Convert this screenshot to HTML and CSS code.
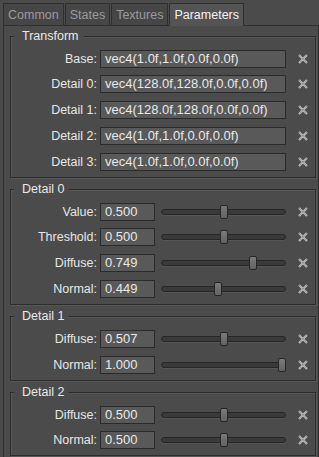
FILE: index.html
```html
<!DOCTYPE html>
<html>
<head>
<meta charset="utf-8">
<link rel="stylesheet" href="styles.css">
</head>
<body>
<div class="tabs">
  <div class="tab">Common</div>
  <div class="tab">States</div>
  <div class="tab">Textures</div>
  <div class="tab active">Parameters</div>
</div>
<div class="panel">
  <div class="group">
    <span class="title">Transform</span>
    <div class="row"><span class="label">Base:</span><div class="field">vec4(1.0f,1.0f,0.0f,0.0f)</div><span class="clr"><svg viewBox="0 0 10 10"><path class="x1" d="M1 1L9 9M9 1L1 9"/><path class="x2" d="M1 1L9 9M9 1L1 9"/></svg></span></div>
    <div class="row"><span class="label">Detail 0:</span><div class="field">vec4(128.0f,128.0f,0.0f,0.0f)</div><span class="clr"><svg viewBox="0 0 10 10"><path class="x1" d="M1 1L9 9M9 1L1 9"/><path class="x2" d="M1 1L9 9M9 1L1 9"/></svg></span></div>
    <div class="row"><span class="label">Detail 1:</span><div class="field">vec4(128.0f,128.0f,0.0f,0.0f)</div><span class="clr"><svg viewBox="0 0 10 10"><path class="x1" d="M1 1L9 9M9 1L1 9"/><path class="x2" d="M1 1L9 9M9 1L1 9"/></svg></span></div>
    <div class="row"><span class="label">Detail 2:</span><div class="field">vec4(1.0f,1.0f,0.0f,0.0f)</div><span class="clr"><svg viewBox="0 0 10 10"><path class="x1" d="M1 1L9 9M9 1L1 9"/><path class="x2" d="M1 1L9 9M9 1L1 9"/></svg></span></div>
    <div class="row"><span class="label">Detail 3:</span><div class="field">vec4(1.0f,1.0f,0.0f,0.0f)</div><span class="clr"><svg viewBox="0 0 10 10"><path class="x1" d="M1 1L9 9M9 1L1 9"/><path class="x2" d="M1 1L9 9M9 1L1 9"/></svg></span></div>
  </div>

  <div class="group">
    <span class="title">Detail 0</span>
    <div class="row"><span class="label">Value:</span><div class="ctl"><div class="field num">0.500</div><div class="slider"><div class="groove"></div><div class="handle" style="left:58.5px"></div></div></div><span class="clr"><svg viewBox="0 0 10 10"><path class="x1" d="M1 1L9 9M9 1L1 9"/><path class="x2" d="M1 1L9 9M9 1L1 9"/></svg></span></div>
    <div class="row"><span class="label">Threshold:</span><div class="ctl"><div class="field num">0.500</div><div class="slider"><div class="groove"></div><div class="handle" style="left:58.5px"></div></div></div><span class="clr"><svg viewBox="0 0 10 10"><path class="x1" d="M1 1L9 9M9 1L1 9"/><path class="x2" d="M1 1L9 9M9 1L1 9"/></svg></span></div>
    <div class="row"><span class="label">Diffuse:</span><div class="ctl"><div class="field num">0.749</div><div class="slider"><div class="groove"></div><div class="handle" style="left:87.6px"></div></div></div><span class="clr"><svg viewBox="0 0 10 10"><path class="x1" d="M1 1L9 9M9 1L1 9"/><path class="x2" d="M1 1L9 9M9 1L1 9"/></svg></span></div>
    <div class="row"><span class="label">Normal:</span><div class="ctl"><div class="field num">0.449</div><div class="slider"><div class="groove"></div><div class="handle" style="left:52.5px"></div></div></div><span class="clr"><svg viewBox="0 0 10 10"><path class="x1" d="M1 1L9 9M9 1L1 9"/><path class="x2" d="M1 1L9 9M9 1L1 9"/></svg></span></div>
  </div>

  <div class="group">
    <span class="title">Detail 1</span>
    <div class="row"><span class="label">Diffuse:</span><div class="ctl"><div class="field num">0.507</div><div class="slider"><div class="groove"></div><div class="handle" style="left:59.3px"></div></div></div><span class="clr"><svg viewBox="0 0 10 10"><path class="x1" d="M1 1L9 9M9 1L1 9"/><path class="x2" d="M1 1L9 9M9 1L1 9"/></svg></span></div>
    <div class="row"><span class="label">Normal:</span><div class="ctl"><div class="field num">1.000</div><div class="slider"><div class="groove"></div><div class="handle" style="left:117px"></div></div></div><span class="clr"><svg viewBox="0 0 10 10"><path class="x1" d="M1 1L9 9M9 1L1 9"/><path class="x2" d="M1 1L9 9M9 1L1 9"/></svg></span></div>
  </div>

  <div class="group">
    <span class="title">Detail 2</span>
    <div class="row"><span class="label">Diffuse:</span><div class="ctl"><div class="field num">0.500</div><div class="slider"><div class="groove"></div><div class="handle" style="left:58.5px"></div></div></div><span class="clr"><svg viewBox="0 0 10 10"><path class="x1" d="M1 1L9 9M9 1L1 9"/><path class="x2" d="M1 1L9 9M9 1L1 9"/></svg></span></div>
    <div class="row"><span class="label">Normal:</span><div class="ctl"><div class="field num">0.500</div><div class="slider"><div class="groove"></div><div class="handle" style="left:58.5px"></div></div></div><span class="clr"><svg viewBox="0 0 10 10"><path class="x1" d="M1 1L9 9M9 1L1 9"/><path class="x2" d="M1 1L9 9M9 1L1 9"/></svg></span></div>
  </div>
</div>
</body>
</html>
```
FILE: styles.css
```css
* { box-sizing: border-box; }
html, body {
  margin: 0;
  padding: 0;
  height: 100%;
  overflow: hidden;
}
body {
  background: #4b4b4b;
  font-family: "Liberation Sans", Arial, sans-serif;
  font-size: 12.5px;
  color: #e6e6e6;
}
.tabs {
  display: flex;
  gap: 1px;
  padding: 3px 0 0 3px;
  height: 25px;
}
.tab {
  height: 22px;
  padding: 3px 4px 0 4px;
  line-height: 16px;
  border: 1px solid #2f2f2f;
  border-bottom: none;
  background: #464646;
  color: #9a9a9a;
}
.tab.active {
  background: #545454;
  color: #f2f2f2;
  height: 23px;
  position: relative;
  z-index: 2;
}
.panel {
  margin-left: 3px;
  width: 316px;
  height: 440px;
  border: 1px solid #2f2f2f;
  padding: 10px 2px 0 6px;
  display: flex;
  flex-direction: column;
  gap: 11.5px;
}
.group {
  position: relative;
  border: 1px solid #2c2c2c;
  box-shadow: 1px 1px 0 #575757, inset 1px 1px 0 #575757;
  padding: 11.5px 0 5px 0;
  display: flex;
  flex-direction: column;
  gap: 5.75px;
}
.title {
  position: absolute;
  top: -8px;
  left: 3px;
  line-height: 15px;
  padding: 0 5px 0 8px;
  background: #4b4b4b;
  color: #e8e8e8;
}
.row {
  display: grid;
  grid-template-columns: 86px 186px 1fr;
  column-gap: 3px;
  height: 20px;
  align-items: center;
}
.label {
  text-align: right;
  color: #e6e6e6;
  white-space: nowrap;
}
.field {
  height: 18px;
  border: 1px solid #2a2a2a;
  background: #595959;
  color: #e8e8e8;
  padding: 0 0 0 4px;
  font-size: 13px;
  line-height: 16px;
  white-space: nowrap;
  overflow: hidden;
}
.ctl {
  display: flex;
  align-items: center;
  gap: 6px;
  height: 20px;
}
.field.num {
  width: 55px;
  flex: none;
}
.slider {
  position: relative;
  flex: 1;
  height: 16px;
}
.groove {
  position: absolute;
  left: 0;
  right: 0;
  top: 5px;
  height: 6px;
  border-radius: 3px;
  background: #3a3a3a;
  border: 1px solid #262626;
  box-shadow: 0 1px 0 #555;
}
.handle {
  position: absolute;
  top: 1px;
  width: 8px;
  height: 14px;
  border: 1px solid #262626;
  border-radius: 2px;
  background: linear-gradient(#7a7a7a, #626262);
}
.clr {
  display: flex;
  justify-content: center;
  align-items: center;
  padding-left: 1px;
}
.clr svg {
  width: 10px;
  height: 10px;
  display: block;
}
.x1 {
  stroke: #bcbcbc;
  stroke-width: 2.2;
  fill: none;
}
.x2 {
  stroke: #6e6e6e;
  stroke-width: 0.8;
  stroke-dasharray: 1 1.2;
  fill: none;
}
```
